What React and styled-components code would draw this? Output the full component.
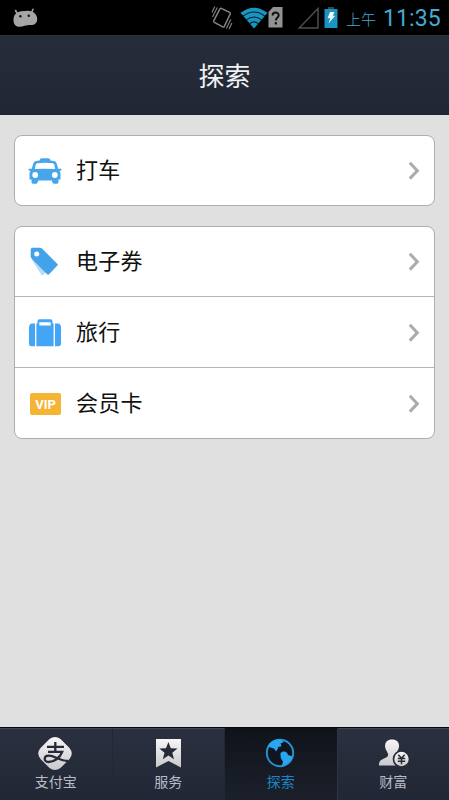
import React from 'react';
import styled, { createGlobalStyle } from 'styled-components';

const GlobalStyle = createGlobalStyle`
    * { box-sizing: border-box; }
    body {
        margin: 0;
        background: #e0e0e0;
        font-family: Roboto, "Noto Sans CJK SC", sans-serif;
    }
`;

const Screen = styled.div`
    display: flex;
    flex-direction: column;
    width: 449px;
    height: 800px;
    overflow: hidden;
    background: #e0e0e0;
`;

const StatusBar = styled.div`
    display: flex;
    align-items: center;
    height: 35px;
    padding: 0 8px 0 12px;
    background: #000;
    color: #45abd0;

    svg { display: block; flex: none; }
`;

const StatusIcons = styled.div`
    display: flex;
    align-items: center;
    margin-left: auto;
`;

const VibrateSlot = styled.span`
    margin-right: 7px;
`;

const SignalSlot = styled.span`
    margin: 0 5px 0 15px;
`;

const Meridiem = styled.span`
    width: 31px;
    margin-left: 8px;
    padding-top: 5px;
    font-size: 15px;
    font-weight: 300;
    line-height: 20px;
    white-space: nowrap;
`;

const Clock = styled.span`
    width: 58px;
    margin-left: 6px;
    padding-top: 2px;
    font-size: 23px;
    letter-spacing: 0.1px;
    line-height: 33px;
    white-space: nowrap;
`;

const Header = styled.header`
    display: flex;
    align-items: center;
    justify-content: center;
    height: 80px;
    padding-top: 4px;
    border-top: 1px solid #30323f;
    border-bottom: 1px solid #1c212e;
    background: linear-gradient(#272c3a, #222735);
`;

const Title = styled.h1`
    margin: 0;
    color: #f0f1f4;
    font-size: 26px;
    font-weight: 400;
    line-height: 38px;
`;

const Content = styled.main`
    display: flex;
    flex: 1;
    flex-direction: column;
    gap: 20px;
    padding: 20px 14px;
`;

const Card = styled.ul`
    margin: 0;
    padding: 0;
    border: 1px solid #aeaeae;
    border-radius: 8px;
    background: #fff;
    list-style: none;
`;

const Row = styled.li`
    display: flex;
    align-items: center;
    height: ${props => props.$height || 71}px;
    padding: 0 14px 0 13px;

    & + & {
        padding-top: 2px;
        border-top: 1px solid #b5b5b5;
    }
`;

const RowIcon = styled.span`
    display: flex;
    width: 48px;
`;

const RowLabel = styled.span`
    flex: 1;
    color: #111;
    font-size: 22px;
    letter-spacing: 0.2px;
    line-height: 32px;
`;

const VipBadge = styled.span`
    width: 31px;
    height: 22px;
    margin-left: 2px;
    border-radius: 2px;
    background: #f5b433;
    color: #fff;
    font: 700 13px/23px Roboto, sans-serif;
    text-align: center;
`;

const TabBar = styled.nav`
    display: flex;
    height: 73px;
    border-top: 1px solid #05070c;
    background: #151923;
`;

const Tab = styled.div`
    display: flex;
    flex: 1;
    flex-direction: column;
    align-items: center;
    padding-top: 7px;
    border-top: 1px solid ${props => (props.$active ? '#0d1118' : '#434754')};
    border-right: 1px solid ${props => (props.$active ? '#303541' : '#232837')};
    background: ${props => (props.$active
      ? 'linear-gradient(#10131a, #1b202b)'
      : 'linear-gradient(#2b3040, #222735)')};
    color: ${props => (props.$active ? '#1a86c8' : '#b9bcc8')};

    &:last-child { border-right: 0; }
    svg { display: block; margin-right: 1px; }
`;

const TabLabel = styled.span`
    font-size: 14px;
    line-height: 20px;
`;

const Android = () => (
  <svg width="27" height="20" viewBox="0 0 27 20">
    <path d="M3.6 2.5 5.5 6M21 1.3 19.5 5" stroke="#a5a5a5" strokeWidth="1.6" strokeLinecap="round" />
    <path d="M1.5 12C1.5 6.5 4.5 4 9 3.2L16 2.8C21.5 2.8 25.2 6.5 25.2 11 25.2 15.5 22 17.4 18 17 14.5 16.8 11 19 6.5 18.7 3 18.3 1.5 15.5 1.5 12Z" fill="#a5a5a5" />
    <circle cx="8.4" cy="8.2" r="1.2" fill="#111" />
    <circle cx="16.8" cy="7.8" r="1.2" fill="#111" />
  </svg>
);

const Vibrate = () => (
  <svg width="22" height="26" viewBox="0 0 22 26" fill="none" stroke="#858585">
    <path d="M10.3 3.4 18.5 7.4Q19.6 8 19.2 9L13.3 21.4Q12.8 22.4 11.8 21.9L3.3 17.3Q2.3 16.7 2.8 15.7L8.8 4.1Q9.3 2.9 10.3 3.4Z" strokeWidth="1.5" />
    <path d="M.9 7.5 3.8 1.5M1.5 12 6.3 2.5M15.3 23.5 19.8 14.5M18 24 20.9 18" strokeWidth="1.1" />
  </svg>
);

const Wifi = () => (
  <svg width="28" height="22" viewBox="0 0 28 22">
    <path d="M.5 5.8Q14-4.5 27.5 5.8L14 21.5Z" fill="#1a94c0" />
    <path d="M3 9.2Q14 .8 25 9.2M6.2 13.1Q14 7 21.8 13.1M9.5 16.7Q14 13.1 18.5 16.7" fill="none" stroke="#03222d" strokeWidth="1.1" />
  </svg>
);

const SimUnknown = () => (
  <svg width="15" height="21" viewBox="0 0 15 21">
    <path d="M5 0H14.5V20.5H.5V5Z" fill="#929292" />
    <path d="M4.6 8.5C4.6 4.5 10.7 4.6 10.7 8.3 10.7 10.7 7.8 10.8 7.8 13.5" fill="none" stroke="#111" strokeWidth="2" />
    <path d="M6.7 15.2H9V17.4H6.7Z" fill="#111" />
  </svg>
);

const Signal = () => (
  <svg width="21" height="22" viewBox="0 0 21 22">
    <path d="M1.2 21H20V1.5Z" fill="none" stroke="#4d4d4d" strokeWidth="1.5" />
  </svg>
);

const Battery = () => (
  <svg width="14" height="22" viewBox="0 0 14 22">
    <path d="M.5 2H13.5V21H.5Z" fill="#1a94c0" />
    <path d="M4 0H10V2H4Z" fill="#37474c" />
    <path d="M6 5H10.5L8.7 8.8H11.2L4.5 16.5 6.3 11.2H3.5Z" fill="#f1fbfe" />
  </svg>
);

const Taxi = () => (
  <svg width="34" height="26" viewBox="0 0 34 26">
    <path d="M11.5 2.5Q11.8.3 14 .3H20Q22.2.3 22.5 2.5L26 3Q28 3.3 28.7 5.5L30.2 10.8H33Q34 11 33.5 12.2L31.5 13Q32.5 14 32.5 16V21.5H30.5V24Q30.5 25.7 29 25.7H26Q24.4 25.7 24.2 24L24 22.5H10L9.8 24Q9.6 25.7 8 25.7H5Q3.5 25.7 3.5 24V21.5H1.5V16Q1.5 14 2.5 13L.5 12.2Q0 11 1 10.8H3.8L5.3 5.5Q6 3.3 8 3Z" fill="#46a5eb" />
    <path d="M9.3 5.3Q17 4.2 24.7 5.3Q26 5.6 26.3 6.8L27.2 11Q17 10.4 6.8 11L7.7 6.8Q8 5.6 9.3 5.3Z" fill="#fff" />
    <circle cx="7.2" cy="17" r="2.9" fill="#fff" />
    <circle cx="26.8" cy="17" r="2.9" fill="#fff" />
  </svg>
);

const Coupon = () => (
  <svg width="34" height="30" viewBox="0 0 34 30">
    <path d="M4 13 14 28.7 18 25.5 5 11Z" fill="#b8dcf7" />
    <path d="M4.4.8 12 .7Q13.2.8 14 1.5L29.4 17Q30.2 17.8 29.4 18.6L20.8 27.4Q20 28.2 19 27.3L3.5 11.5Q2.8 10.6 2.7 9.5V2.4Q2.8.9 4.4.8Z" fill="#42a2ea" />
    <circle cx="8.7" cy="7" r="2.5" fill="#fff" />
  </svg>
);

const Suitcase = () => (
  <svg width="34" height="28" viewBox="0 0 34 28" fill="#42a5f5">
    <path d="M3.5 4.5H7V27.3H3.5Q1 27.3 1 25V9Q1 5 3.5 4.5ZM27 4.5H30.5Q33 5 33 9V25Q33 27.3 30.5 27.3H27Z" />
    <path fillRule="evenodd" d="M8.4 27.3V4.5H9.5V2.3Q9.5.2 11.5.2H22.5Q24.5.2 24.5 2.3V4.5H25.6V27.3ZM11.3 3.2V6.5H22.7V3.2Z" />
  </svg>
);

const Chevron = () => (
  <svg width="12" height="20" viewBox="0 0 12 20">
    <path d="M1.8 1.8 9.3 9.7 1.8 17.6" fill="none" stroke="#acacac" strokeWidth="3.1" />
  </svg>
);

const Silver = ({ id }) => (
  <linearGradient id={id} x1="0" y1="0" x2="0" y2="1">
    <stop stopColor="#f6f6f6" />
    <stop offset="1" stopColor="#c9cacd" />
  </linearGradient>
);

const Alipay = () => (
  <svg width="36" height="36" viewBox="0 0 36 36">
    <defs><Silver id="pay" /></defs>
    <path d="M12.5 3Q18-.8 23.5 3L32.5 12Q37 17.5 32.5 23L23.5 32Q18 36 12.5 32L3.5 23Q-1 17.5 3.5 12Z" fill="url(#pay)" />
    <path d="M10 10.8H27M18.3 6V15.5M11 15.8H25.2C22.8 22 17 26 11.5 26 6.5 26 6.3 19.7 11.8 19.7 18 19.7 22.5 25 31 25" fill="none" stroke="#252a36" strokeWidth="2.3" />
  </svg>
);

const Bookmark = () => (
  <svg width="36" height="36" viewBox="0 0 36 36">
    <defs><Silver id="mark" /></defs>
    <path d="M6 3H31V31.5L18.5 25 6 31.5Z" fill="url(#mark)" />
    <path d="M18.4 6 20.8 12.3 27.5 12.6 22.3 16.8 24 23.3 18.4 19.6 12.8 23.3 14.5 16.8 9.3 12.6 16 12.3Z" fill="#252a36" />
  </svg>
);

const Globe = () => (
  <svg width="36" height="36" viewBox="0 0 36 36">
    <circle cx="18" cy="17" r="13.2" fill="#10161f" stroke="#2693d4" strokeWidth="1.9" />
    <path d="M5.5 10.5C8 5 14 2.6 19.5 3.8L21.8 6 18.5 7.5 19.6 10C17.8 11.2 15.4 10.2 16 12.4L14 15.6 12.2 12.8 9.4 11.8ZM18.4 17.2C20.5 14.4 25.5 15 26 19L30.8 20.6C29 25 25.3 28.8 19.8 30.1L21 25.8 18.8 22.3Z" fill="#2aa5f0" />
  </svg>
);

const Wealth = () => (
  <svg width="36" height="36" viewBox="0 0 36 36">
    <defs><Silver id="rich" /></defs>
    <path d="M17 3.5C22 3.5 24.6 6.5 24 11 23.6 14 21.5 15.8 20.8 18.5L22 21 26 29.5H4Q3.5 24.5 8.5 22.7 13.5 21 13.2 18.5C12.5 15.8 10.4 14 10.1 11 9.7 6.5 12.2 3.5 17 3.5Z" fill="url(#rich)" />
    <circle cx="26.5" cy="23" r="8.8" fill="#272c39" />
    <circle cx="26.5" cy="23" r="7.2" fill="url(#rich)" />
    <path d="M23.3 18.7 26.5 22.3 29.7 18.7M22.8 22.5H30.2M22.8 25.2H30.2M26.5 22.3V28.3" fill="none" stroke="#282c35" strokeWidth="1.5" />
  </svg>
);

const services = [
  { label: '电子券', icon: <Coupon />, height: 69 },
  { label: '旅行', icon: <Suitcase /> },
  { label: '会员卡', icon: <VipBadge>VIP</VipBadge> },
];

const tabs = [
  { label: '支付宝', icon: <Alipay /> },
  { label: '服务', icon: <Bookmark /> },
  { label: '探索', icon: <Globe />, active: true },
  { label: '财富', icon: <Wealth /> },
];

const ListRow = ({ label, icon, height }) => (
  <Row $height={height}>
    <RowIcon>{icon}</RowIcon>
    <RowLabel>{label}</RowLabel>
    <Chevron />
  </Row>
);

const App = () => (
  <Screen>
    <GlobalStyle />
    <StatusBar>
      <Android />
      <StatusIcons>
        <VibrateSlot><Vibrate /></VibrateSlot>
        <Wifi />
        <SimUnknown />
        <SignalSlot><Signal /></SignalSlot>
        <Battery />
        <Meridiem>上午</Meridiem>
        <Clock>11:35</Clock>
      </StatusIcons>
    </StatusBar>
    <Header><Title>探索</Title></Header>
    <Content>
      <Card>
        <ListRow label="打车" icon={<Taxi />} height={69} />
      </Card>
      <Card>
        {services.map(item => <ListRow key={item.label} {...item} />)}
      </Card>
    </Content>
    <TabBar>
      {tabs.map(tab => (
        <Tab key={tab.label} $active={tab.active}>
          {tab.icon}
          <TabLabel>{tab.label}</TabLabel>
        </Tab>
      ))}
    </TabBar>
  </Screen>
);

export default App;
